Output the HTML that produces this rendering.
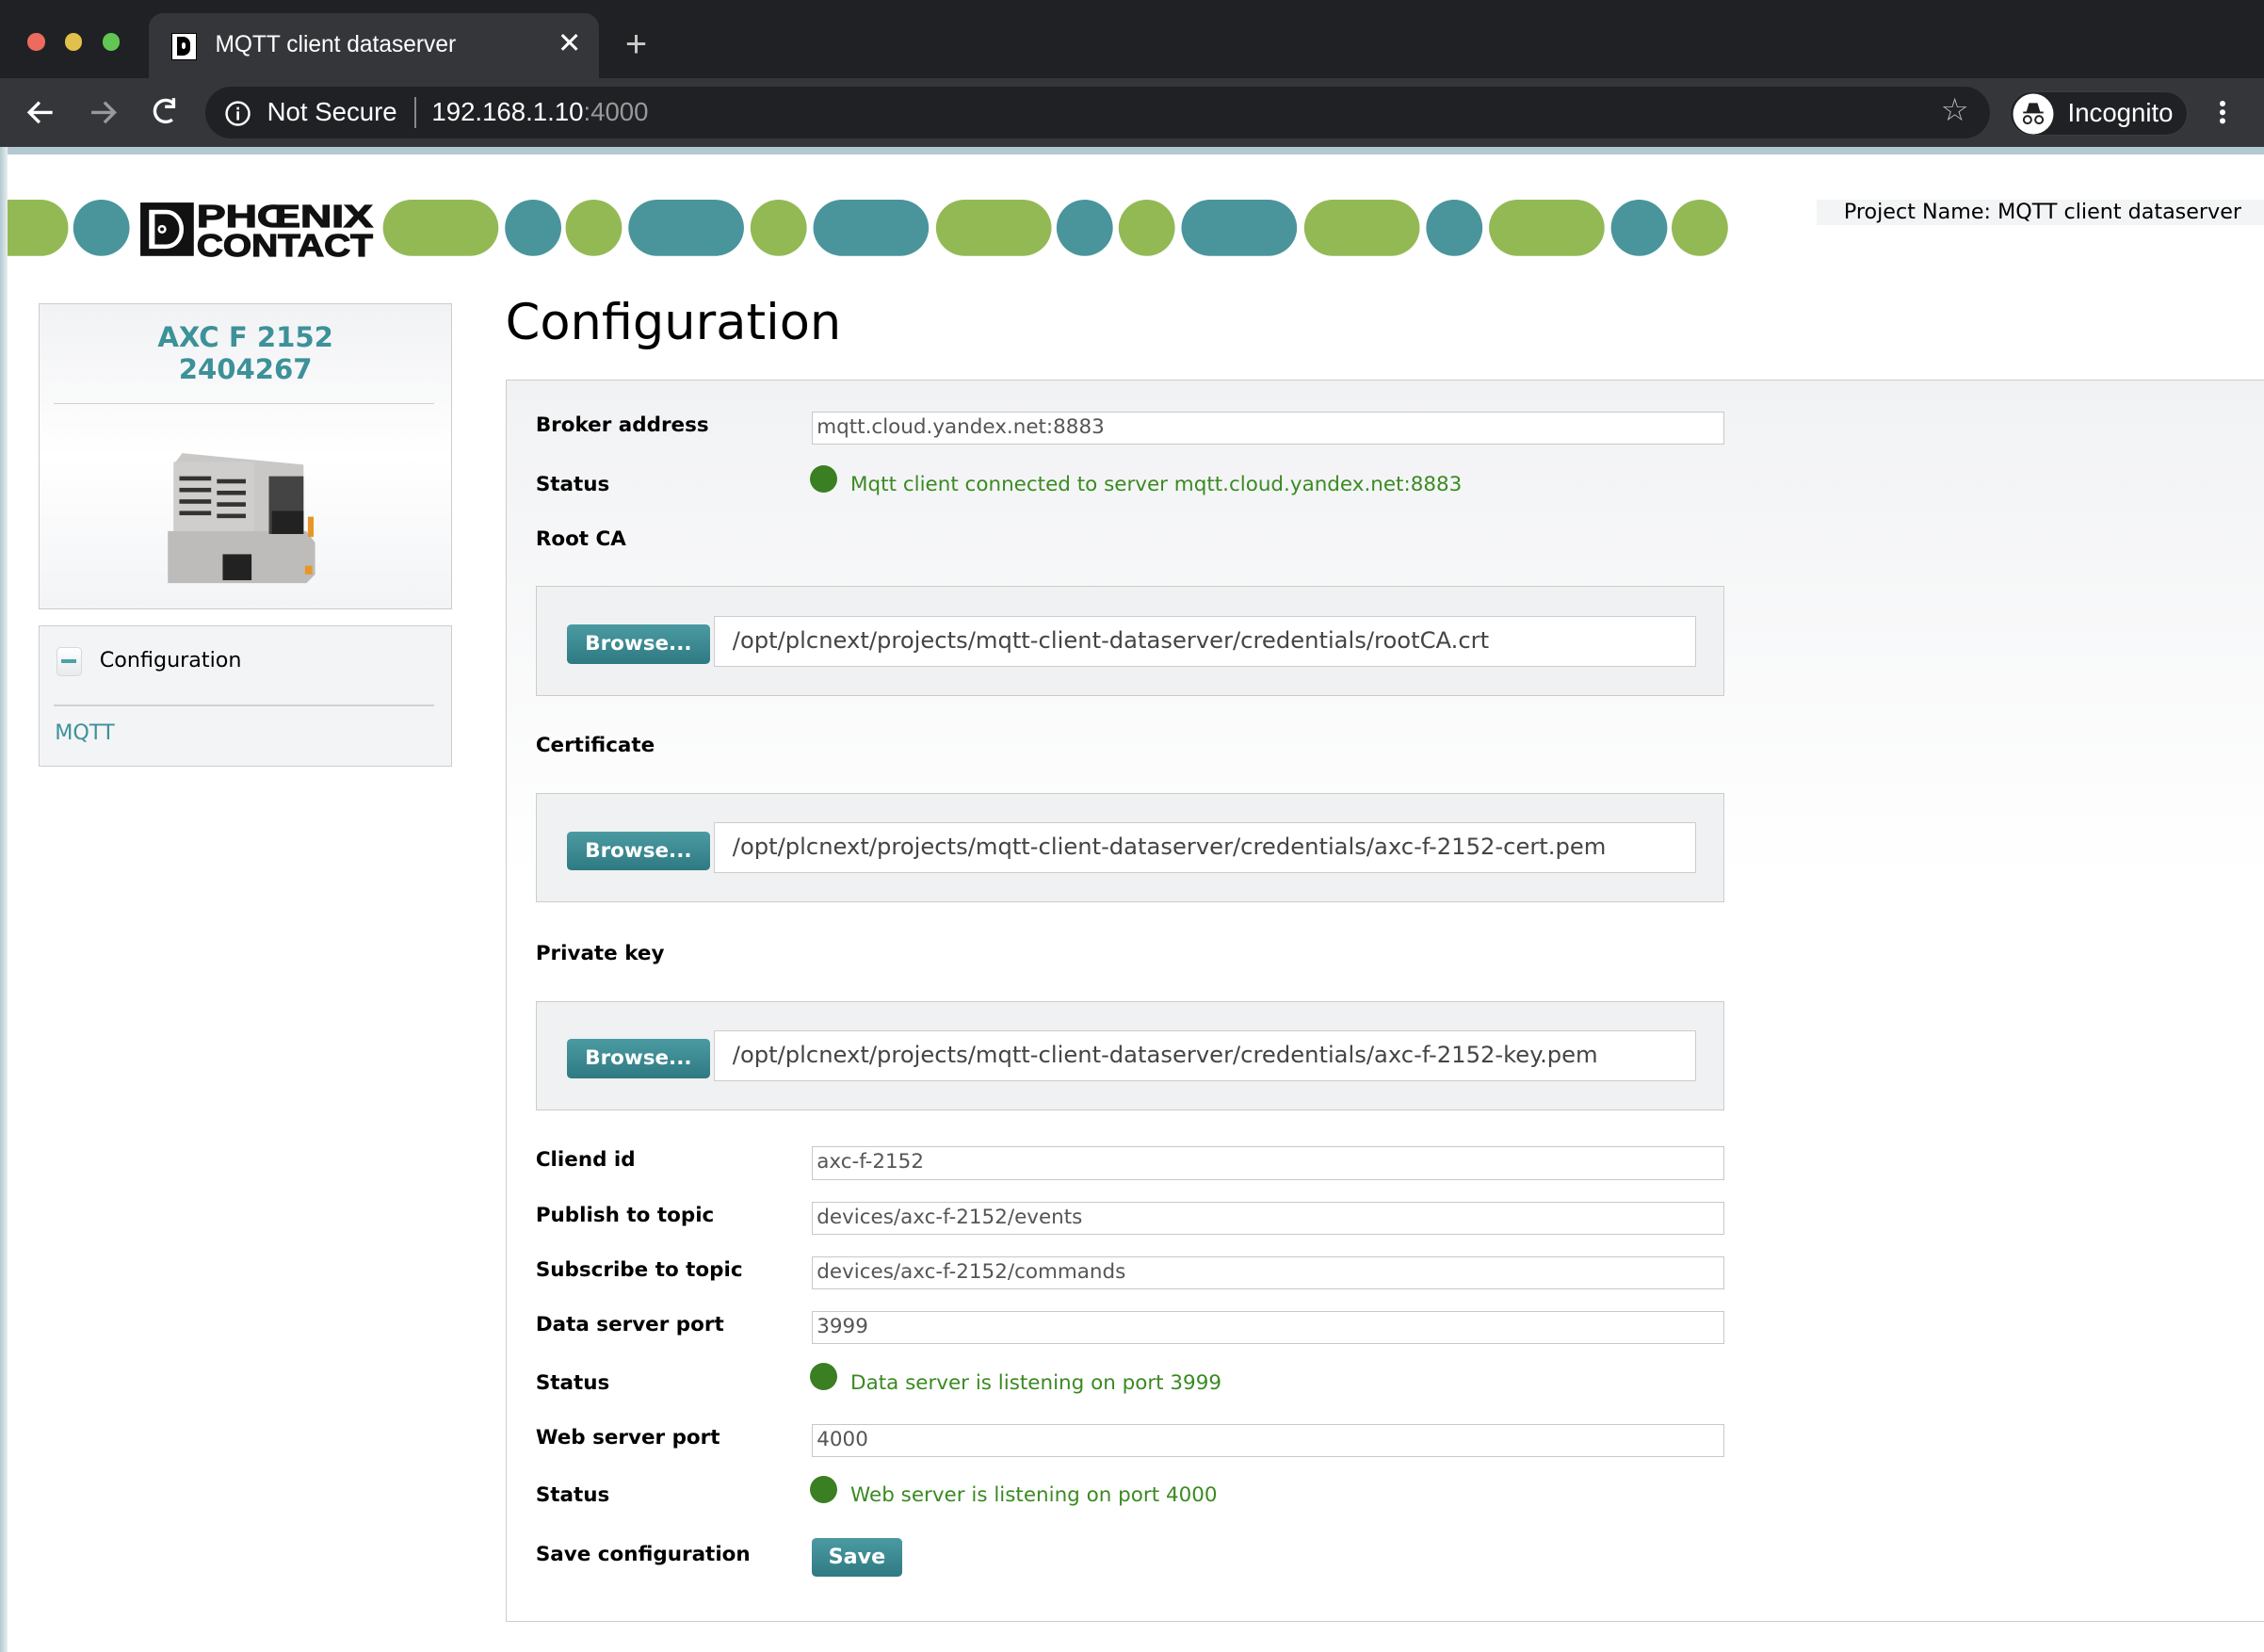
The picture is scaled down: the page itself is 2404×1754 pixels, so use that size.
<!DOCTYPE html>
<html><head><meta charset="utf-8">
<style>
html,body{margin:0;padding:0;overflow:hidden}
body{width:1568px;height:1144px;zoom:1.5332;position:relative;background:#fff;font-family:"DejaVu Sans","Liberation Sans",sans-serif}
.a{position:absolute}
.ui{font-family:"Liberation Sans",sans-serif}
.lbl{position:absolute;left:371px;font-weight:bold;font-size:14px;line-height:16px;color:#000}
.inp{position:absolute;left:562px;border:1px solid #c8c8c8;background:#fff;font-size:14px;line-height:21px;color:#555;padding-left:3px;box-sizing:border-box;width:632px;height:23px}
.dot{position:absolute;left:561px;width:19px;height:19px;border-radius:50%;background:#3a7f22}
.st{position:absolute;left:589px;font-size:14px;color:#3a8a22;line-height:16px}
.box{position:absolute;left:371px;width:823px;height:76px;border:1px solid #ccc;box-sizing:border-box;background:#f0f1f3}
.br{position:absolute;left:21px;top:26px;width:99px;height:27px;border-radius:3px;background:linear-gradient(#4b9aa2,#2f7a82);color:#fff;font-weight:bold;font-size:14px;line-height:27px;text-align:center}
.path{position:absolute;left:123px;top:20px;width:680px;height:35px;border:1px solid #ccc;background:#fff;box-sizing:border-box;font-size:15.8px;line-height:33px;color:#444;padding-left:12px;white-space:nowrap}
</style></head><body>
<div class="a" style="left:0;top:0;width:1568px;height:54px;background:#202124"></div>
<div class="a" style="left:19px;top:23px;width:12px;height:12px;border-radius:50%;background:#ed6a5e"></div>
<div class="a" style="left:45px;top:23px;width:12px;height:12px;border-radius:50%;background:#e1c04c"></div>
<div class="a" style="left:71px;top:23px;width:12px;height:12px;border-radius:50%;background:#62c554"></div>
<div class="a" style="left:103px;top:9px;width:312px;height:50px;background:#35363a;border-radius:10px 10px 0 0"></div>
<div class="a" style="left:119px;top:23px;width:17px;height:19px;background:#fff;border:1px solid #000;box-sizing:border-box"><div style="position:absolute;left:3px;top:2px;width:9px;height:13px;background:#000;border-radius:0 5px 5px 0"></div><div style="position:absolute;left:6px;top:6px;width:3px;height:4px;background:#fff;border-radius:50%"></div></div>
<div class="a ui" style="left:149px;top:22px;font-size:16px;color:#fff">MQTT client dataserver</div>
<div class="a ui" style="left:386px;top:19px;font-size:20px;color:#fff">✕</div>
<div class="a ui" style="left:433px;top:16px;font-size:26px;color:#ccc;font-weight:300">+</div>
<div class="a" style="left:0;top:54px;width:1568px;height:48px;background:#35363a"></div>
<svg class="a" style="left:16px;top:66px" width="120" height="24" viewBox="0 0 120 24" fill="none" stroke-width="2.2">
<path d="M20 12H5M11 5L4 12L11 19" stroke="#fff"/>
<path d="M47 12H62M56 5L63 12L56 19" stroke="#999"/>
<path d="M104 6A7.5 7.5 0 1 0 103 17" stroke="#fff"/><path d="M104 2V8H98" stroke="#fff"/>
</svg>
<div class="a" style="left:142px;top:60px;width:1236px;height:36px;background:#202124;border-radius:18px"></div>
<svg class="a" style="left:155px;top:69px" width="19" height="19"><circle cx="9.5" cy="9.5" r="7.8" fill="none" stroke="#fff" stroke-width="1.6"/><rect x="8.7" y="8" width="1.7" height="6" fill="#fff"/><rect x="8.7" y="5" width="1.7" height="1.8" fill="#fff"/></svg>
<div class="a ui" style="left:185px;top:67px;font-size:18px;color:#fff">Not Secure</div>
<div class="a" style="left:287px;top:67px;width:1px;height:22px;background:#888"></div>
<div class="a ui" style="left:299px;top:67px;font-size:18px;color:#fff">192.168.1.10<span style="color:#999">:4000</span></div>
<div class="a ui" style="left:1344px;top:63px;font-size:22px;color:#bbb">☆</div>
<div class="a" style="left:1392px;top:63px;width:123px;height:31px;border-radius:16px;background:#202124;border:1px solid #3c3d40;box-sizing:border-box"></div>
<svg class="a" style="left:1393px;top:64px" width="30" height="30"><circle cx="15" cy="15" r="14" fill="#fff"/><path d="M8 14h14M11 13l1.5-5h5L19 13z" fill="#202124" stroke="#202124" stroke-width="1.2"/><circle cx="11" cy="19" r="2.6" fill="none" stroke="#202124" stroke-width="1.3"/><circle cx="19" cy="19" r="2.6" fill="none" stroke="#202124" stroke-width="1.3"/></svg>
<div class="a ui" style="left:1432px;top:68px;font-size:18px;color:#fff">Incognito</div>
<div class="a" style="left:1537px;top:70px;width:4px;height:4px;border-radius:50%;background:#fff;box-shadow:0 6px 0 #fff,0 12px 0 #fff"></div>
<div class="a" style="left:0;top:102px;width:1568px;height:5px;background:#b3c9d1"></div>
<div class="a" style="left:0;top:102px;width:5px;height:1042px;background:linear-gradient(90deg,#b3c9d1,#e8eef0)"></div>

<svg class="a" style="left:5px;top:138px" width="1195" height="40">
<g fill="#93b955"><rect x="-20" y="0" width="62" height="39" rx="19"/><rect x="260" width="80" height="39" rx="20"/><ellipse cx="406" cy="19.5" rx="19.5" ry="19.5"/><ellipse cx="534" cy="19.5" rx="19.5" ry="19.5"/><rect x="643" width="80" height="39" rx="20"/><ellipse cx="789" cy="19.5" rx="19.5" ry="19.5"/><rect x="898" width="80" height="39" rx="20"/><rect x="1026" width="80" height="39" rx="20"/><ellipse cx="1172" cy="19.5" rx="19.5" ry="19.5"/></g>
<g fill="#4a959c"><ellipse cx="65" cy="19.5" rx="19.5" ry="19.5"/><ellipse cx="364" cy="19.5" rx="19.5" ry="19.5"/><rect x="430" width="80" height="39" rx="20"/><rect x="558" width="80" height="39" rx="20"/><ellipse cx="746" cy="19.5" rx="19.5" ry="19.5"/><rect x="813" width="80" height="39" rx="20"/><ellipse cx="1002" cy="19.5" rx="19.5" ry="19.5"/><ellipse cx="1130" cy="19.5" rx="19.5" ry="19.5"/></g>
<rect x="90" y="0" width="165" height="40" fill="#fff"/>
<rect x="92" y="2" width="37" height="37" fill="#111"/>
<path d="M98 7h12a12 13.5 0 0 1 0 27h-12z" fill="#fff"/>
<path d="M102 10h8a9 10.5 0 0 1 0 21h-8z" fill="#111"/>
<circle cx="107" cy="20.5" r="3" fill="#fff"/><circle cx="107" cy="20.5" r="1.3" fill="#111"/>
<text x="131" y="19" font-family="Liberation Sans" font-weight="900" font-size="22" textLength="122" lengthAdjust="spacingAndGlyphs" fill="#111" stroke="#111" stroke-width="0.8">PHŒNIX</text>
<text x="131" y="39" font-family="Liberation Sans" font-weight="900" font-size="22" textLength="122" lengthAdjust="spacingAndGlyphs" fill="#111" stroke="#111" stroke-width="0.8">CONTACT</text>
</svg>
<div class="a" style="left:1258px;top:138px;width:310px;height:18px;background:#f3f4f6"></div>
<div class="a" style="left:1277px;top:138px;font-size:14.5px;line-height:18px;color:#000">Project Name: MQTT client dataserver</div>

<div class="a" style="left:27px;top:210px;width:286px;height:212px;border:1px solid #ccc;box-sizing:border-box;background:linear-gradient(#f1f2f4,#fff 50%,#f3f4f6)"></div>
<div class="a" style="left:27px;top:223px;width:286px;text-align:center;font-weight:bold;font-size:19px;line-height:22px;color:#3d9199">AXC F 2152<br>2404267</div>
<div class="a" style="left:37px;top:279px;width:264px;height:1px;background:#d0d2d4"></div>
<svg class="a" style="left:110px;top:310px" width="118" height="100" viewBox="0 0 118 100">
<path d="M10 12l6-8 84 8v40l-8 12H10z" fill="#c9c8c6"/>
<path d="M6 58h96l6 8v22l-6 6H6z" fill="#bdbcba"/>
<rect x="10" y="10" width="56" height="48" fill="#cfcecc"/>
<g fill="#333"><rect x="14" y="20" width="22" height="3"/><rect x="40" y="22" width="20" height="3"/><rect x="14" y="28" width="22" height="3"/><rect x="40" y="30" width="20" height="3"/><rect x="14" y="36" width="22" height="3"/><rect x="40" y="38" width="20" height="3"/><rect x="14" y="44" width="22" height="3"/><rect x="40" y="46" width="20" height="3"/></g>
<rect x="76" y="20" width="24" height="40" fill="#444"/><rect x="78" y="44" width="22" height="16" fill="#222"/>
<rect x="103" y="48" width="4" height="14" fill="#e8962a"/>
<rect x="44" y="74" width="20" height="18" fill="#222"/>
<rect x="101" y="82" width="5" height="6" fill="#e8962a"/>
</svg>
<div class="a" style="left:27px;top:433px;width:286px;height:98px;border:1px solid #ccc;box-sizing:border-box;background:#f3f4f6"></div>
<div class="a" style="left:39px;top:448px;width:18px;height:20px;border:1px solid #d6d8da;border-radius:3px;box-sizing:border-box;background:linear-gradient(#fff,#e8eaec)"><div style="position:absolute;left:3px;top:8px;width:10px;height:2.5px;background:#4aa3ab"></div></div>
<div class="a" style="left:69px;top:449px;font-size:14.5px;line-height:18px;color:#000">Configuration</div>
<div class="a" style="left:37px;top:488px;width:264px;height:1px;background:#d0d2d4"></div>
<div class="a" style="left:38px;top:499px;font-size:14.5px;line-height:18px;color:#3d9199">MQTT</div>

<div class="a" style="left:350px;top:203px;font-size:34.3px;line-height:42px;color:#000">Configuration</div>
<div class="a" style="left:350px;top:263px;width:1230px;height:860px;border:1px solid #ccc;box-sizing:border-box;background:linear-gradient(#f1f2f4,#fff 40%,#fff)"></div>

<div class="lbl" style="top:287px">Broker address</div>
<div class="inp" style="top:285px">mqtt.cloud.yandex.net:8883</div>
<div class="lbl" style="top:328px">Status</div>
<div class="dot" style="top:322px"></div>
<div class="st" style="top:328px">Mqtt client connected to server mqtt.cloud.yandex.net:8883</div>
<div class="lbl" style="top:366px">Root CA</div>
<div class="box" style="top:406px"><div class="br">Browse...</div><div class="path">/opt/plcnext/projects/mqtt-client-dataserver/credentials/rootCA.crt</div></div>
<div class="lbl" style="top:509px">Certificate</div>
<div class="box" style="top:549px"><div class="br">Browse...</div><div class="path">/opt/plcnext/projects/mqtt-client-dataserver/credentials/axc-f-2152-cert.pem</div></div>
<div class="lbl" style="top:653px">Private key</div>
<div class="box" style="top:693px"><div class="br">Browse...</div><div class="path">/opt/plcnext/projects/mqtt-client-dataserver/credentials/axc-f-2152-key.pem</div></div>

<div class="lbl" style="top:796px">Cliend id</div>
<div class="inp" style="top:794px">axc-f-2152</div>
<div class="lbl" style="top:834px">Publish to topic</div>
<div class="inp" style="top:832px">devices/axc-f-2152/events</div>
<div class="lbl" style="top:872px">Subscribe to topic</div>
<div class="inp" style="top:870px">devices/axc-f-2152/commands</div>
<div class="lbl" style="top:910px">Data server port</div>
<div class="inp" style="top:908px">3999</div>
<div class="lbl" style="top:950px">Status</div>
<div class="dot" style="top:944px"></div>
<div class="st" style="top:950px">Data server is listening on port 3999</div>
<div class="lbl" style="top:988px">Web server port</div>
<div class="inp" style="top:986px">4000</div>
<div class="lbl" style="top:1028px">Status</div>
<div class="dot" style="top:1022px"></div>
<div class="st" style="top:1028px">Web server is listening on port 4000</div>
<div class="lbl" style="top:1069px">Save configuration</div>
<div class="a" style="left:562px;top:1065px;width:63px;height:27px;border-radius:3px;background:linear-gradient(#4b9aa2,#2f7a82);color:#fff;font-weight:bold;font-size:14.5px;line-height:27px;text-align:center">Save</div>
</body></html>
